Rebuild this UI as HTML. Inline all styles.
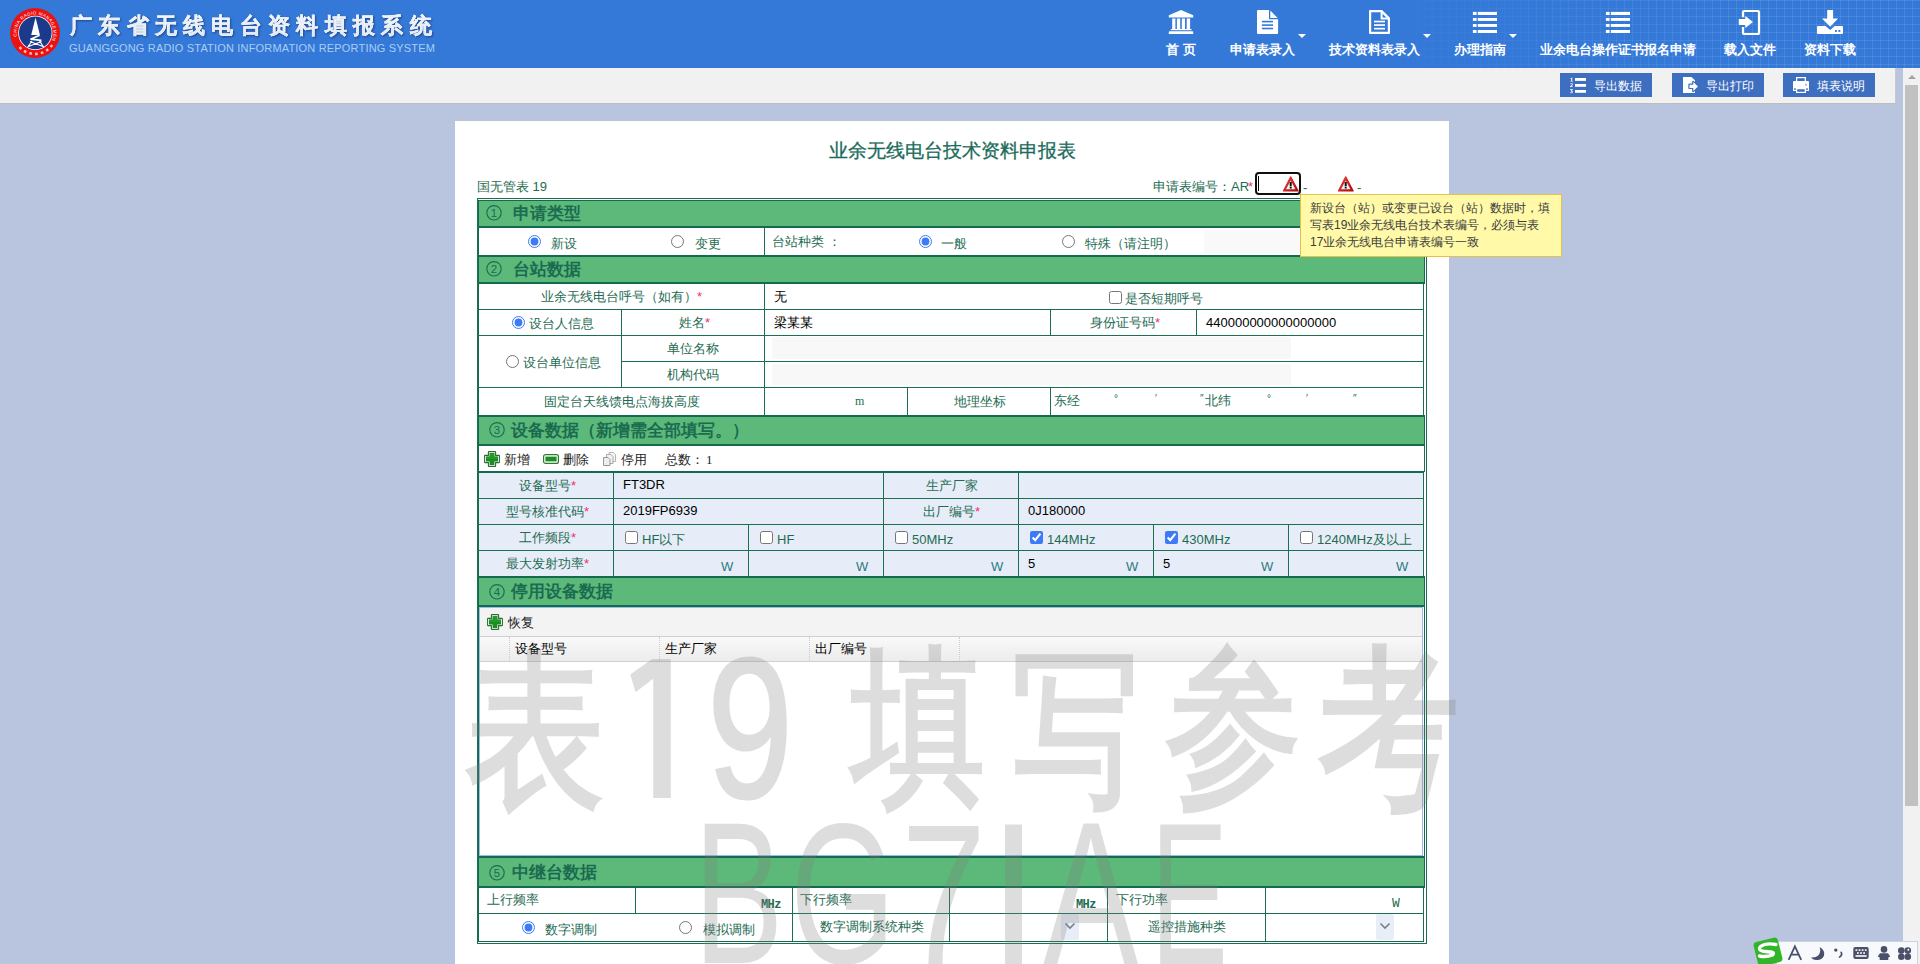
<!DOCTYPE html>
<html><head><meta charset="utf-8">
<style>
*{box-sizing:border-box;margin:0;padding:0}
html,body{width:1920px;height:964px;overflow:hidden}
body{position:relative;background:#b9c4de;font-family:"Liberation Sans",sans-serif;font-size:13px;color:#1e6b52}
.a{position:absolute}
#hdr{left:0;top:0;width:1920px;height:68px;background:#3579d8}
.nav{position:absolute;top:43px;height:13px;font-size:13px;line-height:13px;font-weight:bold;color:#fff;white-space:nowrap}
.caret{position:absolute;top:34px;width:0;height:0;border-left:4px solid transparent;border-right:4px solid transparent;border-top:4px solid #fff}
#tb{left:0;top:68px;width:1896px;height:36px;background:#f1f1f1;border-bottom:1px solid #bdbdbd;border-right:1px solid #c9c9c9}
.btn{position:absolute;top:73px;width:92px;height:24px;background:#3e6ebf;color:#fff;font-size:12px;line-height:26px;white-space:nowrap}
#sb{left:1903px;top:68px;width:17px;height:896px;background:#f1f1f1}
#paper{left:455px;top:121px;width:994px;height:843px;background:#fff}
.sec{position:absolute;left:478px;width:947px;border-right:1px solid #136a4e;background:#5cb97a;border-top:2px solid #136a4e;border-bottom:2px solid #136a4e;border-left:1px solid #136a4e;color:#1b6b50;font-size:16px;font-weight:bold;white-space:nowrap}
.row{position:absolute;left:478px;width:946px;border-left:1px solid #136a4e;border-right:1px solid #1a7050}
.hl{position:absolute;height:1px;background:#1a7050}
.vl{position:absolute;width:1px;background:#1a7050}
.hd{font-size:16.5px!important;line-height:16px!important;font-weight:bold;color:#1b6b50}
.t{position:absolute;white-space:nowrap;font-size:13px;line-height:13px}
.blk{color:#000}
.star{color:#f0306a}
input[type=radio],input[type=checkbox]{position:absolute;width:13px;height:13px;margin:0;accent-color:#3d7af5}
.wm{position:absolute;left:0;top:0;font-size:200px;color:#7f7f7f;white-space:nowrap;line-height:1;transform-origin:0 0}
</style></head><body>

<!-- header -->
<div id="hdr" class="a">
  <svg class="a" style="left:10px;top:8px" width="50" height="50" viewBox="0 0 50 50">
    <circle cx="25" cy="25" r="25" fill="#ee1111"/>
    <path id="arc1" d="M7.62 31.33 A18.5 18.5 0 1 1 42.38 31.33" fill="none"/>
    <text font-size="4.4" font-family="Liberation Sans" fill="#fff" letter-spacing="0.5"><textPath href="#arc1" startOffset="3">CHINA RADIO MANAGEMENT</textPath></text>
    <path d="M42.2 37 A21 21 0 0 1 7.8 37" fill="none" stroke="#fff" stroke-width="2.4" stroke-dasharray="2.6 3.2" opacity=".75"/>
    <circle cx="25.3" cy="24.9" r="17.1" fill="#fff"/>
    <circle cx="25.3" cy="24.9" r="16.3" fill="#1c3a8c"/>
    <path d="M25.6 9.6 L29.9 27 L21.2 27 Z" fill="#fff"/>
    <path d="M29.6 27.2 L20.6 31.2 L31.4 32.4" fill="none" stroke="#fff" stroke-width="1.8" stroke-linejoin="bevel"/>
    <path d="M22 33 L17.5 39.5 M29.5 33 L34 39.5 M18.5 38.5 L31.5 33.5 M20 33.5 L33 38.5" fill="none" stroke="#fff" stroke-width="1.2"/>
  </svg>
  <div class="a" style="left:70px;top:14px;font-size:22px;line-height:24px;font-weight:bold;letter-spacing:6.3px;white-space:nowrap;filter:drop-shadow(1px 1px 1px rgba(0,0,40,.4))"><span style="background:linear-gradient(#ffffff 20%,#d3dfea 90%);-webkit-background-clip:text;background-clip:text;-webkit-text-fill-color:transparent;-webkit-text-stroke:0.2px #e8eef5">广东省无线电台资料填报系统</span></div>
  <div class="a" style="left:69px;top:42px;font-size:11px;line-height:12px;letter-spacing:0.18px;color:#a9cdf5;white-space:nowrap">GUANGGONG RADIO STATION INFORMATION REPORTING SYSTEM</div>
</div>

<!-- toolbar -->
<div id="tb" class="a"></div>
<div class="btn" style="left:1560px"><span style="position:absolute;left:34px">导出数据</span></div>
<div class="btn" style="left:1672px"><span style="position:absolute;left:34px">导出打印</span></div>
<div class="btn" style="left:1783px"><span style="position:absolute;left:34px">填表说明</span></div>

<!-- scrollbar -->
<div id="sb" class="a"></div>
<div class="a" style="left:1905px;top:85px;width:13px;height:721px;background:#c1c1c1"></div>
<div class="a" style="left:1908px;top:75px;width:0;height:0;border-left:4px solid transparent;border-right:4px solid transparent;border-bottom:4px solid #a3a3a3"></div>

<!-- paper -->
<div id="paper" class="a"></div>


<!-- title -->
<div class="t" style="left:829px;top:141px;font-size:19px;line-height:19px;font-weight:normal;-webkit-text-stroke:0.3px #1b6b5a;color:#1b6b5a;font-family:'Liberation Serif',serif">业余无线电台技术资料申报表</div>
<div class="t" style="left:477px;top:180px">国无管表 19</div>
<div class="t" style="left:1153px;top:180px">申请表编号：</div><div class="t" style="left:1231px;top:180px">AR</div><div class="t star" style="left:1248px;top:180px">*</div>
<div class="a" style="left:1255px;top:172px;width:46px;height:23px;border:2px solid #101010;border-radius:4px;background:#fff"></div>
<div class="a" style="left:1258px;top:176px;width:1px;height:15px;background:#000"></div>
<svg class="a" style="left:1283px;top:176px" width="16" height="16" viewBox="0 0 16 16"><defs><linearGradient id="wg1283" x1="0" y1="0" x2="1" y2="1"><stop offset="0" stop-color="#f04040"/><stop offset="1" stop-color="#b00808"/></linearGradient></defs><path d="M7.7 0.8 L15.2 15 L0.4 15 Z" fill="url(#wg1283)" stroke="url(#wg1283)" stroke-width="1.2" stroke-linejoin="round"/><path d="M7.7 4.6 L12.4 13.3 L3 13.3 Z" fill="#eef6fa"/><rect x="6.7" y="6" width="2" height="4.4" fill="#111"/><rect x="6.7" y="11" width="2" height="1.5" fill="#111"/></svg>
<div class="t" style="left:1303px;top:181px">-</div>
<svg class="a" style="left:1338px;top:176px" width="16" height="16" viewBox="0 0 16 16"><defs><linearGradient id="wg1338" x1="0" y1="0" x2="1" y2="1"><stop offset="0" stop-color="#f04040"/><stop offset="1" stop-color="#b00808"/></linearGradient></defs><path d="M7.7 0.8 L15.2 15 L0.4 15 Z" fill="url(#wg1338)" stroke="url(#wg1338)" stroke-width="1.2" stroke-linejoin="round"/><path d="M7.7 4.6 L12.4 13.3 L3 13.3 Z" fill="#eef6fa"/><rect x="6.7" y="6" width="2" height="4.4" fill="#111"/><rect x="6.7" y="11" width="2" height="1.5" fill="#111"/></svg>
<div class="t" style="left:1357px;top:181px">-</div>

<!-- outer table border -->
<div class="a" style="left:477px;top:198px;width:950px;height:746px;border:1px solid #1a7050"></div>
<div class="a" style="left:478px;top:199px;width:948px;height:744px;background:#fff"></div>

<!-- section 1 -->
<div class="sec" style="top:200px;height:28px;border-top-width:1px"></div>
<svg class="a" style="left:486px;top:205px" width="16" height="16" viewBox="0 0 16 16"><circle cx="8" cy="7.8" r="7.2" fill="none" stroke="#1b6b50" stroke-width="1.1"/><text x="8" y="12.2" text-anchor="middle" font-family="Liberation Sans" font-size="11.5" fill="#1b6b50">1</text></svg>
<div class="t hd" style="left:513px;top:205px">申请类型</div>
<div class="row" style="top:228px;height:27px"></div>
<div class="vl" style="left:764px;top:228px;height:27px"></div>
<input type="radio" checked style="left:528px;top:235px"><div class="t" style="left:551px;top:237px">新设</div>
<input type="radio" style="left:671px;top:235px"><div class="t" style="left:695px;top:237px">变更</div>
<div class="t" style="left:772px;top:235px">台站种类 ：</div>
<input type="radio" checked style="left:919px;top:235px"><div class="t" style="left:941px;top:237px">一般</div>
<input type="radio" style="left:1062px;top:235px"><div class="t" style="left:1085px;top:237px">特殊（请注明）</div>
<div class="a" style="left:1204px;top:230px;width:150px;height:23px;background:#f9f9f9"></div>

<!-- section 2 -->
<div class="sec" style="top:255px;height:29px"></div>
<svg class="a" style="left:486px;top:261px" width="16" height="16" viewBox="0 0 16 16"><circle cx="8" cy="7.8" r="7.2" fill="none" stroke="#1b6b50" stroke-width="1.1"/><text x="8" y="12.2" text-anchor="middle" font-family="Liberation Sans" font-size="11.5" fill="#1b6b50">2</text></svg>
<div class="t hd" style="left:513px;top:261px">台站数据</div>
<div class="row" style="top:284px;height:131px"></div>
<div class="hl" style="left:478px;top:309px;width:946px"></div>
<div class="hl" style="left:478px;top:335px;width:946px"></div>
<div class="hl" style="left:621px;top:361px;width:803px"></div>
<div class="hl" style="left:478px;top:387px;width:946px"></div>
<div class="vl" style="left:764px;top:284px;height:131px"></div>
<div class="vl" style="left:621px;top:335px;height:52px"></div>
<div class="vl" style="left:621px;top:309px;height:26px"></div>
<div class="vl" style="left:1050px;top:309px;height:26px"></div>
<div class="vl" style="left:1196px;top:309px;height:26px"></div>
<div class="vl" style="left:907px;top:387px;height:28px"></div>
<div class="vl" style="left:1050px;top:387px;height:28px"></div>
<div class="t" style="left:541px;top:290px">业余无线电台呼号（如有）<span class="star">*</span></div>
<div class="t blk" style="left:774px;top:290px">无</div>
<input type="checkbox" style="left:1109px;top:291px"><div class="t" style="left:1125px;top:292px">是否短期呼号</div>
<input type="radio" checked style="left:512px;top:316px"><div class="t" style="left:529px;top:317px">设台人信息</div>
<div class="t" style="left:679px;top:316px">姓名<span class="star">*</span></div>
<div class="t blk" style="left:774px;top:316px">梁某某</div>
<div class="t" style="left:1090px;top:316px">身份证号码<span class="star">*</span></div>
<div class="t blk" style="left:1206px;top:316px">440000000000000000</div>
<input type="radio" style="left:506px;top:355px"><div class="t" style="left:523px;top:356px">设台单位信息</div>
<div class="t" style="left:667px;top:342px">单位名称</div>
<div class="t" style="left:667px;top:368px">机构代码</div>
<div class="a" style="left:772px;top:337px;width:519px;height:22px;background:#f8f8f8"></div>
<div class="a" style="left:772px;top:364px;width:519px;height:21px;background:#f8f8f8"></div>
<div class="t" style="left:544px;top:395px">固定台天线馈电点海拔高度</div>
<div class="t" style="left:855px;top:395px;font-family:'Liberation Serif',serif;font-size:12px">m</div>
<div class="t" style="left:954px;top:395px">地理坐标</div>
<div class="t" style="left:1054px;top:394px">东经</div>
<div class="t" style="left:1114px;top:392px;font-size:10px">°</div>
<div class="t" style="left:1155px;top:392px;font-size:10px">′</div>
<div class="t" style="left:1200px;top:392px;font-size:10px">″</div>
<div class="t" style="left:1205px;top:394px">北纬</div>
<div class="t" style="left:1267px;top:392px;font-size:10px">°</div>
<div class="t" style="left:1306px;top:392px;font-size:10px">′</div>
<div class="t" style="left:1353px;top:392px;font-size:10px">″</div>


<!-- section 3 -->
<div class="sec" style="top:415px;height:31px"></div>
<svg class="a" style="left:489px;top:422px" width="16" height="16" viewBox="0 0 16 16"><circle cx="8" cy="7.8" r="7.2" fill="none" stroke="#1b6b50" stroke-width="1.1"/><text x="8" y="12.2" text-anchor="middle" font-family="Liberation Sans" font-size="11.5" fill="#1b6b50">3</text></svg>
<div class="t hd" style="left:511px;top:422px">设备数据（新增需全部填写。）</div>
<div class="row" style="top:446px;height:26px;width:947px"></div>
<svg class="a" style="left:484px;top:451px" width="16" height="16" viewBox="0 0 16 16"><path d="M4.8 0.6 H11.2 Q11.6 0.6 11.6 1 V4.4 H15 Q15.4 4.4 15.4 4.8 V11.2 Q15.4 11.6 15 11.6 H11.6 V15 Q11.6 15.4 11.2 15.4 H4.8 Q4.4 15.4 4.4 15 V11.6 H1 Q0.6 11.6 0.6 11.2 V4.8 Q0.6 4.4 1 4.4 H4.4 V1 Q4.4 0.6 4.8 0.6Z" fill="#fff" stroke="#2d6e35" stroke-width="1.1"/><path d="M5.6 2 H10.4 V5.6 H14 V10.4 H10.4 V14 H5.6 V10.4 H2 V5.6 H5.6Z" fill="#1d8c22"/><path d="M5.6 2 H10.4 V5.6 H14 V8 H2 V5.6 H5.6Z" fill="#2aa02e" opacity=".6"/></svg>
<div class="t" style="left:504px;top:453px;color:#222">新增</div>
<svg class="a" style="left:543px;top:454px" width="16" height="10" viewBox="0 0 16 10"><rect x="0.6" y="0.6" width="14.8" height="8.8" rx="2" fill="#fff" stroke="#2d7a35" stroke-width="1.2"/><rect x="2.4" y="2.6" width="11.2" height="4.8" fill="#1d8c22"/></svg>
<div class="t" style="left:563px;top:453px;color:#222">删除</div>
<svg class="a" style="left:603px;top:452px" width="13" height="14" viewBox="0 0 13 14"><path d="M6 0.5 H10.5 L12.5 2.5 V9.5 H6Z" fill="#f6f6f6" stroke="#b5b5b5"/><path d="M3.5 2.5 H8 L10 4.5 V11.5 H3.5Z" fill="#f2f2f2" stroke="#aaa"/><path d="M0.5 5.5 H5 L7 7.5 V13.5 H0.5Z" fill="#eee" stroke="#999"/></svg>
<div class="t" style="left:621px;top:453px;color:#222">停用</div>
<div class="t" style="left:665px;top:453px;color:#222">总数：</div>
<div class="t" style="left:706px;top:453px;color:#222;font-family:'Liberation Serif',serif">1</div>

<div class="a" style="left:478px;top:471px;width:946px;height:2px;background:#136a4e"></div>
<div class="row" style="top:473px;height:103px;background:#e7edf8"></div>
<div class="hl" style="left:478px;top:498px;width:946px"></div>
<div class="hl" style="left:478px;top:524px;width:946px"></div>
<div class="hl" style="left:478px;top:550px;width:946px"></div>
<div class="vl" style="left:613px;top:473px;height:103px"></div>
<div class="vl" style="left:883px;top:473px;height:103px"></div>
<div class="vl" style="left:1018px;top:473px;height:103px"></div>
<div class="vl" style="left:748px;top:524px;height:52px"></div>
<div class="vl" style="left:1153px;top:524px;height:52px"></div>
<div class="vl" style="left:1288px;top:524px;height:52px"></div>
<div class="t" style="left:519px;top:479px">设备型号<span class="star">*</span></div>
<div class="t blk" style="left:623px;top:478px">FT3DR</div>
<div class="t" style="left:926px;top:479px">生产厂家</div>
<div class="t" style="left:506px;top:505px">型号核准代码<span class="star">*</span></div>
<div class="t blk" style="left:623px;top:504px">2019FP6939</div>
<div class="t" style="left:923px;top:505px">出厂编号<span class="star">*</span></div>
<div class="t blk" style="left:1028px;top:504px">0J180000</div>
<div class="t" style="left:519px;top:531px">工作频段<span class="star">*</span></div>
<input type="checkbox" style="left:625px;top:531px"><div class="t" style="left:642px;top:533px">HF以下</div>
<input type="checkbox" style="left:760px;top:531px"><div class="t" style="left:777px;top:533px">HF</div>
<input type="checkbox" style="left:895px;top:531px"><div class="t" style="left:912px;top:533px">50MHz</div>
<input type="checkbox" checked style="left:1030px;top:531px"><div class="t" style="left:1047px;top:533px">144MHz</div>
<input type="checkbox" checked style="left:1165px;top:531px"><div class="t" style="left:1182px;top:533px">430MHz</div>
<input type="checkbox" style="left:1300px;top:531px"><div class="t" style="left:1317px;top:533px">1240MHz及以上</div>
<div class="t" style="left:506px;top:557px">最大发射功率<span class="star">*</span></div>
<div class="t" style="left:721px;top:560px;color:#2c7a80">W</div>
<div class="t" style="left:856px;top:560px;color:#2c7a80">W</div>
<div class="t" style="left:991px;top:560px;color:#2c7a80">W</div>
<div class="t" style="left:1126px;top:560px;color:#2c7a80">W</div>
<div class="t" style="left:1261px;top:560px;color:#2c7a80">W</div>
<div class="t" style="left:1396px;top:560px;color:#2c7a80">W</div>
<div class="t blk" style="left:1028px;top:557px">5</div>
<div class="t blk" style="left:1163px;top:557px">5</div>

<!-- section 4 -->
<div class="sec" style="top:576px;height:31px"></div>
<svg class="a" style="left:489px;top:584px" width="16" height="16" viewBox="0 0 16 16"><circle cx="8" cy="7.8" r="7.2" fill="none" stroke="#1b6b50" stroke-width="1.1"/><text x="8" y="12.2" text-anchor="middle" font-family="Liberation Sans" font-size="11.5" fill="#1b6b50">4</text></svg>
<div class="t hd" style="left:511px;top:583px">停用设备数据</div>
<div class="a" style="left:478px;top:607px;width:947px;height:249px;border-left:1px solid #136a4e;border-right:1px solid #136a4e;background:#fff"></div>
<div class="a" style="left:479px;top:607px;width:944px;height:249px;border:1px solid #99bbe8"></div>
<div class="a" style="left:480px;top:608px;width:942px;height:29px;background:#f3f3f3;border-bottom:1px solid #d0d0d0"></div>
<svg class="a" style="left:487px;top:614px" width="16" height="16" viewBox="0 0 16 16"><path d="M4.8 0.6 H11.2 Q11.6 0.6 11.6 1 V4.4 H15 Q15.4 4.4 15.4 4.8 V11.2 Q15.4 11.6 15 11.6 H11.6 V15 Q11.6 15.4 11.2 15.4 H4.8 Q4.4 15.4 4.4 15 V11.6 H1 Q0.6 11.6 0.6 11.2 V4.8 Q0.6 4.4 1 4.4 H4.4 V1 Q4.4 0.6 4.8 0.6Z" fill="#fff" stroke="#2d6e35" stroke-width="1.1"/><path d="M5.6 2 H10.4 V5.6 H14 V10.4 H10.4 V14 H5.6 V10.4 H2 V5.6 H5.6Z" fill="#1d8c22"/><path d="M5.6 2 H10.4 V5.6 H14 V8 H2 V5.6 H5.6Z" fill="#2aa02e" opacity=".6"/></svg>
<div class="t" style="left:508px;top:616px;color:#222">恢复</div>
<div class="a" style="left:480px;top:637px;width:942px;height:25px;background:linear-gradient(#f9f9f9,#ececec);border-bottom:1px solid #d0d0d0"></div>
<div class="a" style="left:509px;top:637px;height:24px;border-left:1px dotted #ccc"></div>
<div class="a" style="left:659px;top:637px;height:24px;border-left:1px dotted #ccc"></div>
<div class="a" style="left:809px;top:637px;height:24px;border-left:1px dotted #ccc"></div>
<div class="a" style="left:959px;top:637px;height:24px;border-left:1px dotted #ccc"></div>
<div class="t" style="left:515px;top:642px;color:#000">设备型号</div>
<div class="t" style="left:665px;top:642px;color:#000">生产厂家</div>
<div class="t" style="left:815px;top:642px;color:#000">出厂编号</div>

<!-- section 5 -->
<div class="sec" style="top:856px;height:32px"></div>
<svg class="a" style="left:489px;top:865px" width="16" height="16" viewBox="0 0 16 16"><circle cx="8" cy="7.8" r="7.2" fill="none" stroke="#1b6b50" stroke-width="1.1"/><text x="8" y="12.2" text-anchor="middle" font-family="Liberation Sans" font-size="11.5" fill="#1b6b50">5</text></svg>
<div class="t hd" style="left:512px;top:864px">中继台数据</div>
<div class="row" style="top:888px;height:53px"></div>
<div class="hl" style="left:478px;top:913px;width:946px"></div>
<div class="a" style="left:478px;top:941px;width:946px;height:1px;background:#136a4e"></div>
<div class="vl" style="left:635px;top:888px;height:25px"></div>
<div class="vl" style="left:792px;top:888px;height:53px"></div>
<div class="vl" style="left:949px;top:888px;height:53px"></div>
<div class="vl" style="left:1107px;top:888px;height:53px"></div>
<div class="vl" style="left:1265px;top:888px;height:53px"></div>
<div class="t" style="left:487px;top:893px">上行频率</div>
<div class="t" style="left:761px;top:899px;font-family:'Liberation Mono',monospace;font-size:12px;font-weight:bold;letter-spacing:-0.6px">MHz</div>
<div class="t" style="left:800px;top:893px">下行频率</div>
<div class="t" style="left:1076px;top:899px;font-family:'Liberation Mono',monospace;font-size:12px;font-weight:bold;letter-spacing:-0.6px">MHz</div>
<div class="t" style="left:1116px;top:893px">下行功率</div>
<div class="t" style="left:1392px;top:897px;font-family:'Liberation Mono',monospace;font-size:13px;line-height:13px">W</div>
<input type="radio" checked style="left:522px;top:921px"><div class="t" style="left:545px;top:923px">数字调制</div>
<input type="radio" style="left:679px;top:921px"><div class="t" style="left:703px;top:923px">模拟调制</div>
<div class="t" style="left:820px;top:920px">数字调制系统种类</div>
<div class="t" style="left:1148px;top:920px">遥控措施种类</div>
<div class="a" style="left:1061px;top:914px;width:18px;height:26px;background:#e8eef8;border-radius:2px"></div>
<svg class="a" style="left:1064px;top:922px" width="12" height="8" viewBox="0 0 12 8"><path d="M1.5 1.5 L6 6 L10.5 1.5" stroke="#7a7f8a" stroke-width="1.6" fill="none"/></svg>
<div class="a" style="left:1376px;top:914px;width:18px;height:26px;background:#e8eef8;border-radius:2px"></div>
<svg class="a" style="left:1379px;top:922px" width="12" height="8" viewBox="0 0 12 8"><path d="M1.5 1.5 L6 6 L10.5 1.5" stroke="#7a7f8a" stroke-width="1.6" fill="none"/></svg>


<!-- nav -->
<div class="a" style="left:1280px;top:0;width:640px;height:68px;background-image:linear-gradient(90deg,rgba(255,255,255,.09) 1px,transparent 1px),linear-gradient(rgba(255,255,255,.09) 1px,transparent 1px);background-size:8px 8px;-webkit-mask-image:linear-gradient(90deg,transparent 15%,#000 70%);"></div>
<svg class="a" style="left:1168px;top:9px" width="26" height="26" viewBox="0 0 26 26"><path d="M13 1 L25.2 6.2 V8.5 H0.8 V6.2 Z" fill="#fff"/><rect x="4.2" y="9.5" width="3.2" height="10.5" fill="#fff"/><rect x="8.9" y="9.5" width="3.3" height="10.5" fill="#fff"/><rect x="13.8" y="9.5" width="3.2" height="10.5" fill="#fff"/><rect x="18.7" y="9.5" width="3.4" height="10.5" fill="#fff"/><rect x="2.8" y="20" width="20.7" height="1.2" fill="#fff"/><path d="M1.6 22.2 H24.4 Q25.2 22.2 25.2 23 V25.1 H0.8 V23 Q0.8 22.2 1.6 22.2Z" fill="#fff"/></svg>
<div class="nav" style="left:1166px">首&nbsp;页</div>
<svg class="a" style="left:1256px;top:9px" width="24" height="26" viewBox="0 0 24 26"><path d="M2 1 H13 V10.2 H22.1 V24 Q22.1 25 21.1 25 H2 Q1 25 1 24 V2 Q1 1 2 1Z" fill="#fff"/><path d="M14.3 1.6 L21.6 8.9 H14.3Z" fill="#fff"/><rect x="5.9" y="11.8" width="11.1" height="1.6" fill="#3579d8"/><rect x="5.9" y="15.3" width="11.1" height="1.6" fill="#3579d8"/><rect x="5.9" y="18.7" width="11.1" height="1.6" fill="#3579d8"/></svg>
<div class="nav" style="left:1230px">申请表录入</div>
<div class="caret" style="left:1298px"></div>
<svg class="a" style="left:1368px;top:9px" width="24" height="26" viewBox="0 0 24 26"><path d="M2.1 2.1 H13.6 L20.9 9.4 V23.9 H2.1 Z" fill="none" stroke="#fff" stroke-width="2.2" stroke-linejoin="round"/><path d="M13.6 2.1 V9.4 H20.9" fill="none" stroke="#fff" stroke-width="2"/><rect x="6" y="11.7" width="11" height="1.7" fill="#fff"/><rect x="6" y="15.2" width="11" height="1.7" fill="#fff"/><rect x="6" y="18.8" width="11" height="1.7" fill="#fff"/></svg>
<div class="nav" style="left:1329px">技术资料表录入</div>
<div class="caret" style="left:1423px"></div>
<svg class="a" style="left:1472px;top:11px" width="26" height="23" viewBox="0 0 26 23"><g fill="#fff"><rect x="0.9" y="0.9" width="3.7" height="3.1"/><rect x="5.8" y="0.9" width="19.2" height="3.1"/><rect x="0.9" y="7" width="3.7" height="2.9"/><rect x="5.8" y="7" width="19.2" height="2.9"/><rect x="0.9" y="13" width="3.7" height="2.9"/><rect x="5.8" y="13" width="19.2" height="2.9"/><rect x="0.9" y="19" width="3.7" height="3"/><rect x="5.8" y="19" width="19.2" height="3"/></g></svg>
<div class="nav" style="left:1454px">办理指南</div>
<div class="caret" style="left:1509px"></div>
<svg class="a" style="left:1605px;top:11px" width="26" height="23" viewBox="0 0 26 23"><g fill="#fff"><rect x="0.9" y="0.9" width="3.7" height="3.1"/><rect x="5.8" y="0.9" width="19.2" height="3.1"/><rect x="0.9" y="7" width="3.7" height="2.9"/><rect x="5.8" y="7" width="19.2" height="2.9"/><rect x="0.9" y="13" width="3.7" height="2.9"/><rect x="5.8" y="13" width="19.2" height="2.9"/><rect x="0.9" y="19" width="3.7" height="3"/><rect x="5.8" y="19" width="19.2" height="3"/></g></svg>
<div class="nav" style="left:1540px">业余电台操作证书报名申请</div>
<svg class="a" style="left:1738px;top:9px" width="24" height="26" viewBox="0 0 24 26"><path d="M5 8.2 V3 Q5 2 6 2 H20 Q21 2 21 3 V24 Q21 25 20 25 H6 Q5 25 5 24 V17.9" fill="none" stroke="#fff" stroke-width="2.2"/><path d="M0.8 10 H7.3 V7 L15 13 L7.3 19.1 V16 H0.8 Z" fill="#fff"/></svg>
<div class="nav" style="left:1724px">载入文件</div>
<svg class="a" style="left:1816px;top:9px" width="28" height="26" viewBox="0 0 28 26"><path d="M11.2 1 H17.1 V9.4 H22.1 L14.2 17.8 L6 9.4 H11.2 Z" fill="#fff"/><path d="M2 17 H9.5 L14.2 21 L18.8 17 H26 Q27 17 27 18 V24 Q27 25 26 25 H2 Q1 25 1 24 V18 Q1 17 2 17Z" fill="#fff"/><rect x="19" y="21" width="1.9" height="1.9" fill="#3579d8"/><rect x="22.4" y="21" width="1.9" height="1.9" fill="#3579d8"/></svg>
<div class="nav" style="left:1804px">资料下载</div>

<!-- button icons -->
<svg class="a" style="left:1569px;top:77px" width="18" height="17" viewBox="0 0 18 17"><g fill="#fff"><path d="M1.6 1.2 L3.2 0.5 V4 H4 V4.6 H1.3 V4 H2.2 V1.7 L1.6 2Z"/><path d="M1 7 Q2.5 5.6 3.8 6.6 Q4.3 7.6 2.4 9.5 H4 V10.1 H1 V9.6 Q3.2 7.6 2.9 7.1 Q2.3 6.5 1.3 7.4Z"/><path d="M1.1 12.3 H3.8 V12.9 L2.8 13.8 Q4.1 14.1 3.8 15.3 Q3.2 16.5 1 16 V15.4 Q2.8 15.8 2.9 15 Q2.9 14.3 1.7 14.3 V13.8 L2.6 12.9 H1.1Z"/><rect x="6" y="1" width="11" height="2.9"/><rect x="6" y="7" width="11" height="2.8"/><rect x="6" y="13" width="11" height="2.8"/></g></svg>
<svg class="a" style="left:1682px;top:76px" width="18" height="18" viewBox="0 0 18 18"><path d="M1 1 H9.4 L13 4.3 V17 H1 Z" fill="#fff"/><path d="M7.5 8.7 H11.3 V6 L16 10.5 L11.3 14.9 V11.9 H7.5 Z" fill="#fff" stroke="#3e6ebf" stroke-width="2.4" stroke-linejoin="round" paint-order="stroke"/></svg>
<svg class="a" style="left:1792px;top:76px" width="18" height="18" viewBox="0 0 18 18"><g fill="#fff"><path d="M4 1 H14 V7 H12.7 V2.2 H5.2 V7 H4Z"/><path d="M2 5 H16 Q17 5 17 6 V15 H14 V12 H4 V15 H1 V6 Q1 5 2 5Z"/><path d="M4 12 H14 V17 H4 Z M5.2 13.2 V15.8 H12.7 V13.2Z"/></g><rect x="13.1" y="7.8" width="1.7" height="1.7" fill="#8ea8d8"/><rect x="2.2" y="12.3" width="1.6" height="1.6" fill="#3e6ebf"/><rect x="14.2" y="12.3" width="1.6" height="1.6" fill="#3e6ebf"/><rect x="5.8" y="14" width="6.4" height="0.9" fill="#3e6ebf"/></svg>

<!-- tooltip -->
<div class="a" style="left:1300px;top:194px;width:262px;height:63px;background:#fff9a8;border:1px solid #e6c04a;"></div>
<div class="a" style="left:1310px;top:200px;width:250px;font-size:12px;line-height:17px;color:#3c3c3c;white-space:nowrap">新设台（站）或变更已设台（站）数据时，填<br>写表19业余无线电台技术表编号，必须与表<br>17业余无线电台申请表编号一致</div>

<!-- watermark -->
<div class="a" style="left:0;top:0;width:1920px;height:964px;opacity:0.26;z-index:5;pointer-events:none">
<svg class="a" style="left:0;top:0" width="700" height="800"><path d="M652.1 659 L670.8 659 L670.8 798 L653.2 798 L653.2 678.8 L635.5 692.3 L630.3 674.6 Z" fill="#7f7f7f"/></svg>
<div class="wm" style="transform:matrix(0.699,0,0,0.8436,465.0,648.31);-webkit-text-stroke:5px #7f7f7f">表</div>
<div class="wm" style="transform:matrix(0.7695,0,0,0.991,707.14,629.25);-webkit-text-stroke:3px #7f7f7f">9</div>
<div class="wm" style="transform:matrix(0.6715,0,0,0.8463,850.96,641.81);-webkit-text-stroke:5px #7f7f7f">填</div>
<div class="wm" style="transform:matrix(0.6373,0,0,0.8433,1011.91,645.62);-webkit-text-stroke:5px #7f7f7f">写</div>
<div class="wm" style="transform:matrix(0.6841,0,0,0.8453,1165.0,642.0);-webkit-text-stroke:5px #7f7f7f">参</div>
<div class="wm" style="transform:matrix(0.7092,0,0,0.881,1317.7,640.74);-webkit-text-stroke:5px #7f7f7f">考</div>
<div class="wm" style="transform:matrix(0.672,0,0,1.0159,693.65,791.31);">B</div>
<div class="wm" style="transform:matrix(0.6771,0,0,1.007,790.23,792.8);">G</div>
<div class="wm" style="transform:matrix(0.7637,0,0,1.0072,901.16,793.78);">7</div>
<div class="wm" style="transform:matrix(0.9105,0,0,1.0145,988.31,792.55);">I</div>
<div class="wm" style="transform:matrix(0.7121,0,0,1.0219,1043.29,791.3);">A</div>
<div class="wm" style="transform:matrix(0.578,0,0,1.0145,1150.75,792.55);">E</div>
</div>

<!-- IME bar -->
<svg class="a" style="left:1750px;top:936px;z-index:6" width="170" height="28" viewBox="1750 936 170 28">
<rect x="1776.5" y="941.5" width="141" height="24" fill="#f7f9fc" stroke="#c9d3e3" stroke-width="1"/>
<g transform="rotate(-14 1768 952)"><rect x="1755.5" y="939.5" width="25" height="25" rx="3.5" fill="#32b52a"/></g>
<path d="M1776 944.5 Q1766 942.5 1760.5 946.5 Q1757.5 950 1763 951.2 L1772 952.2 Q1774.5 953 1772.5 955 Q1766 957.5 1759.5 956" stroke="#fff" stroke-width="3.4" fill="none" stroke-linecap="round"/>
<path d="M1788.6 959.8 L1794.9 946.3 L1801.2 959.8 M1791 954.6 H1798.8" stroke="#4a5068" stroke-width="1.8" fill="none"/>
<path d="M1819.5 947 Q1825.5 950.5 1824 955.8 Q1821.5 960.8 1815.8 960 Q1812.5 959.4 1811 957.4 Q1815.5 958 1818.5 955.2 Q1821.5 951.5 1819.5 947Z" fill="#4a5068"/>
<circle cx="1835.8" cy="950.1" r="1.7" fill="#4a5068"/>
<path d="M1841.2 952.3 Q1842.6 955.2 1839.6 957" stroke="#4a5068" stroke-width="1.7" fill="none" stroke-linecap="round"/>
<rect x="1853.3" y="947.1" width="15.4" height="11.8" rx="1.8" fill="#4a5068"/>
<g fill="#fff"><rect x="1855.5" y="949.3" width="1.8" height="1.6"/><rect x="1858.6" y="949.3" width="1.8" height="1.6"/><rect x="1861.7" y="949.3" width="1.8" height="1.6"/><rect x="1864.8" y="949.3" width="1.8" height="1.6"/><rect x="1857" y="952.2" width="1.8" height="1.6"/><rect x="1860.1" y="952.2" width="1.8" height="1.6"/><rect x="1863.2" y="952.2" width="1.8" height="1.6"/><rect x="1855.5" y="955.2" width="11.1" height="1.6"/></g>
<circle cx="1884" cy="949.4" r="3.3" fill="#4a5068"/>
<path d="M1880 953.3 H1888 L1890.2 956.6 L1888.3 957.6 V960 H1879.7 V957.6 L1877.8 956.6Z" fill="#4a5068"/>
<circle cx="1901.3" cy="950.6" r="3.3" fill="#4a5068"/><circle cx="1907.8" cy="950.6" r="3.3" fill="#4a5068"/><circle cx="1901.3" cy="956.8" r="3.3" fill="#4a5068"/><circle cx="1907.8" cy="956.8" r="3.3" fill="#4a5068"/>
<circle cx="1908.3" cy="949.8" r="1" fill="#fff"/>
</svg>
</body></html>
